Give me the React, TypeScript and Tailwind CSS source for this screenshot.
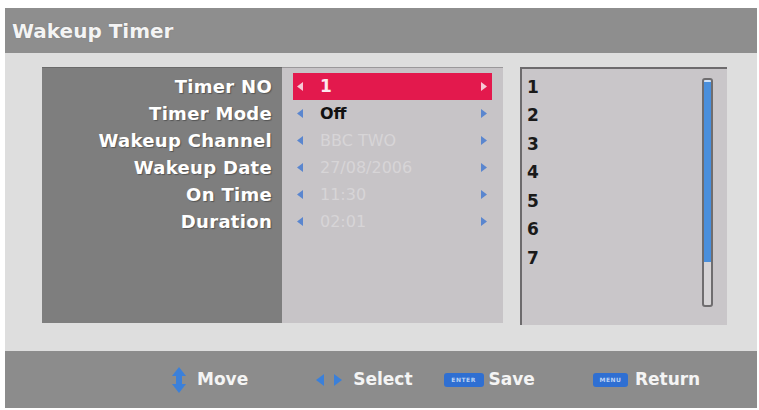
const rows = [
  { label: "Timer NO", value: "1", kind: "active" },
  { label: "Timer Mode", value: "Off", kind: "on" },
  { label: "Wakeup Channel", value: "BBC TWO", kind: "dim" },
  { label: "Wakeup Date", value: "27/08/2006", kind: "dim" },
  { label: "On Time", value: "11:30", kind: "dim" },
  { label: "Duration", value: "02:01", kind: "dim" },
] as const;

const timers = ["1", "2", "3", "4", "5", "6", "7"];

function Tri({ dir, color }: { dir: "l" | "r"; color: string }) {
  return (
    <svg width="6" height="9" viewBox="0 0 6 9">
      {dir === "l" ? (
        <path d="M6 0 L0 4.5 L6 9 Z" fill={color} />
      ) : (
        <path d="M0 0 L6 4.5 L0 9 Z" fill={color} />
      )}
    </svg>
  );
}

function Pill({ text, w }: { text: string; w: number }) {
  return (
    <span
      className="inline-flex items-center justify-center rounded-[3px] bg-[#2f6fd2] text-[6px] font-bold leading-none tracking-[0.5px] text-[#bcd3f5] h-[14px]"
      style={{ width: w }}
    >
      {text}
    </span>
  );
}

export default function App() {
  return (
    <div
      className="w-[759px] h-[410px] bg-white pt-[8px] pl-[5px] overflow-hidden"
      style={{ fontFamily: '"DejaVu Sans", "Liberation Sans", sans-serif' }}
    >
      <div className="w-[752px] h-[400px] flex flex-col">
        <div className="h-[45px] bg-[#8e8e8e] flex items-center pl-[7px]">
          <span className="text-[20px] font-bold text-[#f4f4f4] [text-shadow:0_0_1px_#666]">
            Wakeup Timer
          </span>
        </div>

        <div className="h-[298px] bg-[#dedede] pl-[37px] pt-[14px] flex">
          <div className="w-[240px] h-[256px] bg-[#7e7e7e] border-t border-[#6a6a6a] pt-[5px] pr-[10px] flex flex-col items-end">
            {rows.map((r) => (
              <div
                key={r.label}
                className="h-[27px] flex items-center text-[18px] font-bold text-white tracking-[0.3px] [text-shadow:1px_1px_1px_#555]"
              >
                {r.label}
              </div>
            ))}
          </div>

          <div className="w-[221px] h-[256px] bg-[#c7c4c7] border-t border-[#9a989a] pt-[5px] pl-[11px]">
            {rows.map((r) => {
              const active = r.kind === "active";
              return (
                <div
                  key={r.label}
                  className={
                    active
                      ? "w-[199px] h-[27px] bg-[#e3194d] flex items-center pl-[4px] pr-[5px]"
                      : "w-[199px] h-[27px] flex items-center pl-[4px] pr-[5px]"
                  }
                >
                  <Tri dir="l" color={active ? "#f6c8d4" : "#5a86cf"} />
                  <span
                    className={
                      r.kind === "active"
                        ? "ml-[17px] flex-1 text-[17px] font-bold text-[#fde8ee]"
                        : r.kind === "on"
                          ? "ml-[17px] flex-1 text-[16px] font-bold text-[#111]"
                          : "ml-[17px] flex-1 text-[16px] text-[#d7d5d7]"
                    }
                  >
                    {r.value}
                  </span>
                  <Tri dir="r" color={active ? "#f6c8d4" : "#5a86cf"} />
                </div>
              );
            })}
          </div>

          <div className="w-[17px]" />

          <div className="w-[207px] h-[258px] bg-[#c9c6c9] border-l-2 border-t-2 border-[#6d6b6d] flex">
            <div className="flex-1 pt-[4px] pl-[5px]">
              {timers.map((t) => (
                <div
                  key={t}
                  className="h-[28.5px] flex items-center text-[17px] font-bold text-[#1a1a1a]"
                >
                  {t}
                </div>
              ))}
            </div>
            <div className="mt-[9px] mr-[14px] w-[11px] h-[229px] rounded-[3px] border-2 border-[#6f6d6f] bg-[#d6d4d6] flex flex-col">
              <div className="h-[182px] rounded-t-[2px] bg-[#4a8fdc] border-t-2 border-[#cfe2f8]" />
            </div>
          </div>
        </div>

        <div className="h-[57px] bg-[#8c8c8c] flex items-center text-[17px] font-bold text-[#f4f4f4]">
          <div className="ml-[167px] flex items-center">
            <svg width="14" height="26" viewBox="0 0 14 26">
              <path d="M7 0 L14 9 L0 9 Z" fill="#3b80da" />
              <rect x="4" y="9" width="6" height="8" fill="#3b80da" />
              <path d="M0 17 L14 17 L7 26 Z" fill="#3b80da" />
            </svg>
            <span className="ml-[11px]">Move</span>
          </div>
          <div className="ml-[66px] flex items-center">
            <svg width="30" height="14" viewBox="0 0 30 14">
              <path d="M10 1 L2 7 L10 13 Z" fill="#3b80da" />
              <path d="M20 1 L28 7 L20 13 Z" fill="#3b80da" />
            </svg>
            <span className="ml-[9px]">Select</span>
          </div>
          <div className="ml-[31px] flex items-center">
            <Pill text="ENTER" w={40} />
            <span className="ml-[5px]">Save</span>
          </div>
          <div className="ml-[58px] flex items-center">
            <Pill text="MENU" w={35} />
            <span className="ml-[7px]">Return</span>
          </div>
        </div>
      </div>
    </div>
  );
}
